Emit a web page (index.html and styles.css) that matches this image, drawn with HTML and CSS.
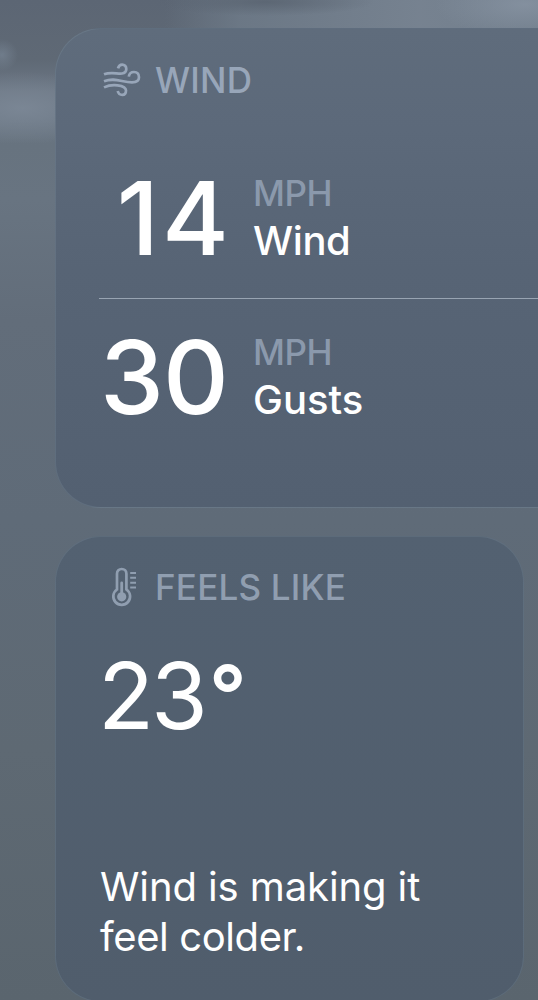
FILE: index.html
```html
<!DOCTYPE html>
<html lang="en">
<head>
  <meta charset="UTF-8">
  <meta name="viewport" content="width=device-width, initial-scale=1.0">
  <title>Weather</title>
  <link rel="stylesheet" href="styles.css">
</head>
<body>
  <main>
    <section class="card card-wind">
      <h2 class="card-title">
        <svg class="icon" viewBox="0 0 40 44" fill="none" stroke="currentColor" stroke-width="2.7">
          <path d="M4 16.3C11 13.6 17 16 22 15.5C25 15 26.3 13.2 26.3 11C26.3 8.3 24.5 6.6 22.2 6.6C20 6.6 18.6 8 18 10.4"/>
          <path d="M4 23.3C15 19 22 24.4 32 24.4C36.5 24.4 39 22.6 39 19.3C39 16 37 14 34 14C31.1 14 29.2 15.8 28.8 18.6"/>
          <path d="M4 29.4C9 27 13.5 26.8 17.5 27.3C23 28 26 29.8 26 32.5C26 35.2 24.6 36.9 22.3 36.9C19.8 36.9 18.3 35.4 17.7 33"/>
        </svg>
        <span class="label-wind">WIND</span>
      </h2>
      <div class="reading">
        <span class="value value-14">14</span>
        <div class="info">
          <span class="unit">MPH</span>
          <span class="name">Wind</span>
        </div>
      </div>
      <div class="reading">
        <span class="value">30</span>
        <div class="info">
          <span class="unit">MPH</span>
          <span class="name name-gusts">Gusts</span>
        </div>
      </div>
    </section>

    <section class="card card-feels">
      <h2 class="card-title">
        <svg class="icon" viewBox="0 0 40 44" fill="none" stroke="currentColor" stroke-width="2.7">
          <path d="M17 24.5V8.8C17 5.9 19 4 21.7 4C24.4 4 26.4 5.9 26.4 8.8V24.5A8.4 8.4 0 1 1 17 24.5Z"/>
          <path d="M21.7 18V32" stroke-width="2.8" stroke-linecap="round"/>
          <circle cx="21.7" cy="31.8" r="4.6" fill="currentColor" stroke="none"/>
          <path d="M30.2 7.9H36M30.2 12.8H36M30.2 17.7H36M30.2 22.6H36" stroke-width="2"/>
        </svg>
        <span class="label-feels">FEELS LIKE</span>
      </h2>
      <div class="temp">23<span class="degree">°</span></div>
      <p class="note">Wind is making it<br><span class="note-end">feel colder.</span></p>
    </section>
  </main>
</body>
</html>
```
FILE: styles.css
```css
:root {
  --text: #ffffff;
  --muted: #98a6b9;
  --unit: #8b99ac;
  --edge: rgba(135, 153, 168, 0.24);
}
* { box-sizing: border-box; margin: 0; padding: 0; }
body {
  height: 1000px;
  overflow: hidden;
  font-family: Inter, "Liberation Sans", sans-serif;
  color: var(--text);
  /* clouds over the sky */
  background:
    radial-gradient(ellipse 90px 34px at 525px 4px, rgba(139, 151, 166, 0.7), transparent),
    radial-gradient(ellipse 110px 14px at 265px 2px, rgba(88, 98, 111, 0.8), transparent),
    linear-gradient(90deg, transparent 165px, rgba(112, 125, 139, 0.75) 240px, rgba(121, 133, 147, 0.9) 420px, rgba(116, 129, 143, 0.9) 538px) 0 0 / 100% 60px no-repeat,
    radial-gradient(ellipse 100px 36px at 22px 108px, rgba(128, 140, 155, 0.7), transparent),
    radial-gradient(ellipse 16px 16px at 2px 55px, rgba(123, 137, 153, 0.6), transparent),
    linear-gradient(#5c6674 0, #5f6975 60px, #6d7885 92px, #6c7885 120px, #67737f 145px, #687481 200px, #626d7a 320px, #5f6b78 520px, #5e6973 750px, #5a656e 1000px);
}
main {
  display: flex;
  flex-direction: column;
  gap: 28px;
  padding: 28px 0 0 55px;
}
.card {
  border: 1px solid var(--edge);
  border-radius: 46px;
  padding: 29px 0 0 44px;
}
.card-wind {
  height: 480px;
  border-right: none;
  border-radius: 46px 0 0 46px;
  background: linear-gradient(#5f6c7c 0, #5c697a 100px, #576475 240px, #536071 100%);
}
.card-feels {
  width: 469px;
  height: 466px;
  padding-top: 28px;
  background: linear-gradient(#536171, #505d6c);
}
.card-title {
  display: flex;
  align-items: center;
  height: 44px;
  font-size: 35px;
  font-weight: 500;
  color: var(--muted);
  white-space: nowrap;
}
.card-feels .card-title { color: #909eb0; }
.icon {
  width: 40px;
  height: 44px;
  margin-right: 15px;
  overflow: visible;
}
.label-wind { letter-spacing: 0.2px; }
.label-feels { letter-spacing: 0.2px; }
.reading {
  display: flex;
  align-items: center;
  height: 154px;
}
.card-wind .card-title + .reading {
  height: 165px;
  margin-top: 32px;
  margin-left: -1px;
  padding: 2px 0 0 1px;
  border-bottom: 1px solid #98a4b2;
}
.value {
  width: 124px;
  padding-top: 2px;
  text-align: right;
  font-size: 102px;
  line-height: 1;
  font-weight: 500;
  letter-spacing: -1px;
}
.value-14 {
  width: 132px;
  letter-spacing: 3px;
}
.info {
  display: flex;
  flex-direction: column;
  margin-left: 29px;
}
.value-14 + .info { margin-left: 21px; }
.unit {
  font-size: 35px;
  line-height: 47px;
  font-weight: 500;
  letter-spacing: -0.5px;
  color: var(--unit);
}
.name {
  font-size: 40px;
  line-height: 47px;
  font-weight: 500;
  letter-spacing: -0.4px;
}
.name-gusts { letter-spacing: 0; }
.temp {
  margin: 32px 0 0 -2px;
  font-size: 92px;
  line-height: 110px;
  letter-spacing: -3px;
}
.degree {
  margin-left: 4px;
  font-size: 82px;
  line-height: 1;
  font-weight: 600;
  vertical-align: 5px;
}
.note {
  margin-top: 111px;
  font-size: 40px;
  line-height: 50px;
  letter-spacing: -0.1px;
}
.note-end { letter-spacing: -0.4px; }
```
